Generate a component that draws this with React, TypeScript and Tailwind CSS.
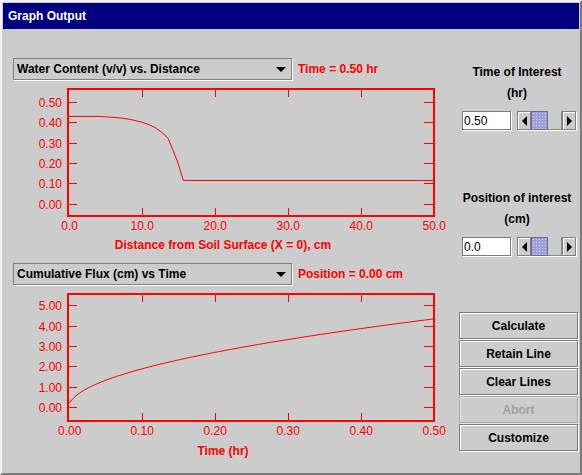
import React from 'react';

const RED = '#ff0000';

// pixel layout shared by both charts (page coordinates)
const X0 = 68.7;
const XSTEP = 73;
const FRAME_X = 68;
const FRAME_W = 366;
const FRAME_H = 127;

interface ChartProps {
  top: number; // top of svg in page coords
  height: number;
  frameTop: number;
  y0: number; // pixel row of value 0
  yLabels: string[];
  xLabels: string[];
  xLabelBaseline: number;
  title: string;
  titleBaseline: number;
  points: [number, number][]; // already in page coords
}

const Chart: React.FC<ChartProps> = ({
  top,
  height,
  frameTop,
  y0,
  yLabels,
  xLabels,
  xLabelBaseline,
  title,
  titleBaseline,
  points,
}) => {
  const frameBottom = frameTop + FRAME_H + 1;
  return (
    <svg
      width={452}
      height={height}
      viewBox={`3 ${top} 452 ${height}`}
      className="block"
    >
      <rect
        x={FRAME_X}
        y={frameTop + 1}
        width={FRAME_W}
        height={FRAME_H}
        fill="none"
        stroke={RED}
        strokeWidth={2}
        shapeRendering="crispEdges"
      />
      {/* x ticks */}
      {[1, 2, 3, 4].map((k) => {
        const x = Math.round(X0 + k * XSTEP) + 0.5;
        return (
          <g key={k} stroke={RED} strokeWidth={1} shapeRendering="crispEdges">
            <line x1={x} x2={x} y1={frameTop + 2} y2={frameTop + 9} />
            <line x1={x} x2={x} y1={frameBottom - 8} y2={frameBottom - 1} />
          </g>
        );
      })}
      {/* y ticks + labels */}
      {yLabels.map((lab, k) => {
        const y = Math.floor(y0 - k * 20.45) + 0.5;
        return (
          <g key={lab}>
            <line x1={69} x2={77} y1={y} y2={y} stroke={RED} shapeRendering="crispEdges" />
            <line x1={424} x2={433} y1={y} y2={y} stroke={RED} shapeRendering="crispEdges" />
            <text x={62} y={y + 4.5} textAnchor="end" fontSize={12} fill={RED}>
              {lab}
            </text>
          </g>
        );
      })}
      {xLabels.map((lab, k) => (
        <text
          key={lab}
          x={X0 + k * XSTEP + (k === 0 ? 1 : 0.5)}
          y={xLabelBaseline}
          textAnchor="middle"
          fontSize={12}
          fill={RED}
        >
          {lab}
        </text>
      ))}
      <text
        x={223}
        y={titleBaseline}
        textAnchor="middle"
        fontSize={12}
        fontWeight="bold"
        fill={RED}
      >
        {title}
      </text>
      <polyline
        points={points.map((p) => p.join(',')).join(' ')}
        fill="none"
        stroke={RED}
        strokeWidth={1}
      />
    </svg>
  );
};

// water content profile (distance cm, theta)
const profile: [number, number][] = [
  [0, 0.43],
  [4.3, 0.43],
  [7, 0.423],
  [8.5, 0.415],
  [10, 0.402],
  [11, 0.39],
  [12, 0.372],
  [13, 0.345],
  [13.6, 0.323],
  [14.3, 0.264],
  [15, 0.2],
  [15.7, 0.117],
  [50, 0.117],
];
const profilePts: [number, number][] = profile.map(([d, v]) => [
  X0 + (d / 10) * XSTEP,
  204.4 - v * 204.6,
]);

const fluxPts: [number, number][] = [[X0, 407.8 - 0.2 * 20.45]];
for (let i = 1; i <= 100; i++) {
  const t = (i / 100) * 0.5;
  const s = 5.9 * Math.sqrt(t) + 0.35 * t;
  fluxPts.push([X0 + t * 730, 407.8 - s * 20.45]);
}

const Dropdown: React.FC<{ label: string }> = ({ label }) => (
  <div className="flex items-center justify-between w-[279px] h-[22px] border border-[#808080] shadow-[1px_1px_0_#ffffff] bg-[#cccccc] pl-[3px] pr-[5px]">
    <span className="text-[12px] font-bold text-black leading-none">{label}</span>
    <span className="w-0 h-0 border-l-[5px] border-r-[5px] border-t-[5px] border-l-transparent border-r-transparent border-t-black" />
  </div>
);

const ArrowBtn: React.FC<{ dir: 'left' | 'right' }> = ({ dir }) => (
  <div className="w-[14px] h-full flex items-center justify-center border border-[#808080] shadow-[inset_1px_1px_0_#ffffff] bg-[#cccccc]">
    {dir === 'left' ? (
      <span className="w-0 h-0 border-t-[5px] border-b-[5px] border-r-[5px] border-t-transparent border-b-transparent border-r-black" />
    ) : (
      <span className="w-0 h-0 border-t-[5px] border-b-[5px] border-l-[5px] border-t-transparent border-b-transparent border-l-black" />
    )}
  </div>
);

const SpinRow: React.FC<{ value: string }> = ({ value }) => (
  <div className="flex items-center pl-[7px] gap-[6px] h-[19px]">
    <div className="w-[49px] h-[19px] bg-white border border-[#7a7a7a] shadow-[1px_1px_0_#ffffff] pl-[1px] flex items-center text-[12px] text-black">
      {value}
    </div>
    <div className="flex w-[59px] h-[19px] shadow-[1px_1px_0_#ffffff]">
      <ArrowBtn dir="left" />
      <div className="w-[17px] h-full border border-[#6666aa] bg-[#a0a0d4] bg-[radial-gradient(#ccccff_35%,transparent_40%)] bg-[length:3px_3px]" />
      <div className="flex-1 h-full bg-[#cccccc] border-b border-r border-[#8a8a8a]" />
      <ArrowBtn dir="right" />
    </div>
  </div>
);

const ActionButton: React.FC<{ label: string; disabled?: boolean }> = ({
  label,
  disabled,
}) => (
  <div
    className={
      disabled
        ? 'h-[27px] w-[119px] flex items-center justify-center border border-[#a8a8a8] shadow-[inset_1px_1px_0_#e6e6e6,1px_1px_0_#e6e6e6] text-[12px] font-bold text-[#a0a0a0]'
        : 'h-[27px] w-[119px] flex items-center justify-center border border-[#7a7a7a] shadow-[inset_1px_1px_0_#ffffff,1px_1px_0_#ffffff] text-[12px] font-bold text-black'
    }
  >
    {label}
  </div>
);

export default function App() {
  return (
    <div className="w-[582px] h-[475px] border-2 border-t-[#f2f2f2] border-l-[#f2f2f2] border-r-[#7a7a7a] border-b-[#7a7a7a] bg-[#cccccc] p-px font-['Liberation_Sans',Arial,sans-serif] overflow-hidden">
      {/* Title bar */}
      <div className="h-[26px] bg-[#000080] text-white text-[12px] font-bold leading-[26px] pl-[5px]">
        Graph Output
      </div>

      <div className="flex h-[443px] overflow-hidden">
        {/* Left: charts */}
        <div className="w-[452px] flex flex-col">
          <div className="mt-[29px] h-[22px] flex items-center pl-[10px] gap-[6px]">
            <Dropdown label="Water Content (v/v) vs. Distance" />
            <span className="text-[12px] font-bold text-[#ff0000]">Time = 0.50 hr</span>
          </div>
          <Chart
            top={80}
            height={183}
            frameTop={88}
            y0={204.4}
            yLabels={['0.00', '0.10', '0.20', '0.30', '0.40', '0.50']}
            xLabels={['0.0', '10.0', '20.0', '30.0', '40.0', '50.0']}
            xLabelBaseline={230}
            title="Distance from Soil Surface (X = 0), cm"
            titleBaseline={249}
            points={profilePts}
          />
          <div className="h-[22px] flex items-center pl-[10px] gap-[6px]">
            <Dropdown label="Cumulative Flux (cm) vs Time" />
            <span className="text-[12px] font-bold text-[#ff0000]">Position = 0.00 cm</span>
          </div>
          <Chart
            top={285}
            height={187}
            frameTop={293}
            y0={407.8}
            yLabels={['0.00', '1.00', '2.00', '3.00', '4.00', '5.00']}
            xLabels={['0.00', '0.10', '0.20', '0.30', '0.40', '0.50']}
            xLabelBaseline={435}
            title="Time (hr)"
            titleBaseline={455}
            points={fluxPts}
          />
        </div>

        {/* Right: controls */}
        <div className="w-[124px] flex flex-col pt-[33px]">
          <div className="text-center text-[12px] font-bold leading-[21px] text-black">
            <div>Time of Interest</div>
            <div>(hr)</div>
          </div>
          <div className="mt-[7px]">
            <SpinRow value="0.50" />
          </div>
          <div className="mt-[58px] text-center text-[12px] font-bold leading-[21px] text-black">
            <div>Position of interest</div>
            <div>(cm)</div>
          </div>
          <div className="mt-[7px]">
            <SpinRow value="0.0" />
          </div>
          <div className="mt-[56px] pl-[4px] flex flex-col gap-px">
            <ActionButton label="Calculate" />
            <ActionButton label="Retain Line" />
            <ActionButton label="Clear Lines" />
            <ActionButton label="Abort" disabled />
            <ActionButton label="Customize" />
          </div>
        </div>
      </div>
    </div>
  );
}
